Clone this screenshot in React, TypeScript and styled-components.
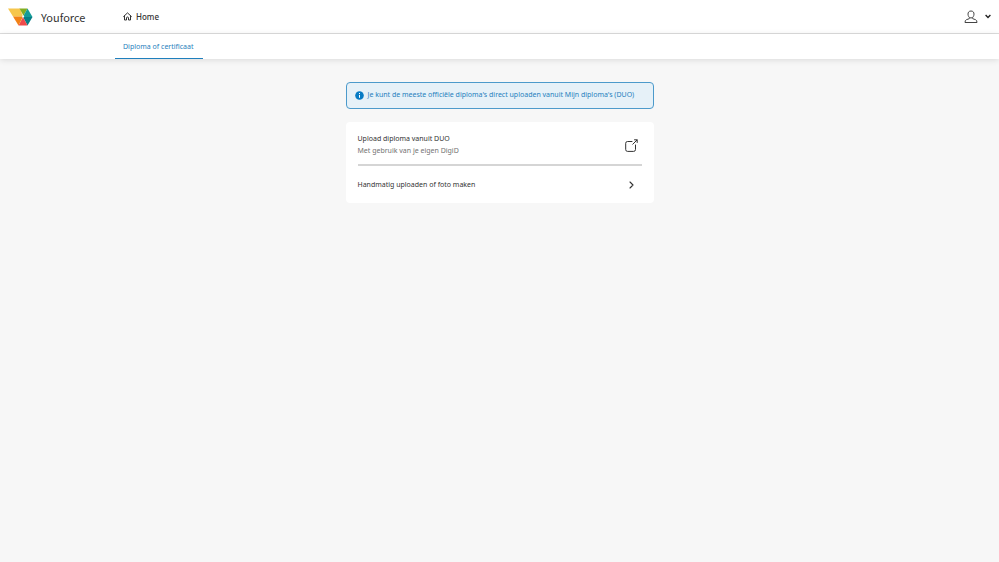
import React from "react";
import styled, { createGlobalStyle } from "styled-components";

const GlobalStyle = createGlobalStyle`
  *, *::before, *::after { box-sizing: border-box; }
  body {
    margin: 0;
    background: #f7f7f7;
    color: #333333;
    font: 7px/12px "Noto Sans", "Open Sans", sans-serif;
  }
  a { color: inherit; text-decoration: none; }
  button { font: inherit; color: inherit; background: none; border: 0; padding: 0; cursor: pointer; }
  svg { display: block; flex: none; }
`;

const TopBar = styled.header`
  display: flex;
  align-items: center;
  height: 34px;
  padding: 0 8px;
  background: #ffffff;
  border-bottom: 1px solid #dedede;
`;

const Brand = styled.a`
  display: flex;
  align-items: center;
  gap: 8px;
  width: 115px;
  font: 11px/16px "Noto Sans CJK JP", sans-serif;
`;

const HomeLink = styled.a`
  display: flex;
  align-items: center;
  gap: 4px;
  font: 500 8px/12px "Noto Sans", sans-serif;
`;

const AccountButton = styled.button`
  display: flex;
  align-items: center;
  gap: 7px;
  margin-left: auto;
`;

const TabBar = styled.nav`
  display: flex;
  height: 25px;
  padding-left: 115px;
  background: #ffffff;
  box-shadow: 0 1px 6px rgba(0, 0, 0, 0.12);
`;

const Tab = styled.a`
  padding: 7px 9px 5px 8px;
  color: #1f7fbd;
  border-bottom: 1px solid #1f7fbd;
`;

const Content = styled.main`
  display: flex;
  flex-direction: column;
  gap: 13px;
  width: 100%;
  max-width: 308px;
  margin: 23px auto 0;
`;

const Notice = styled.p`
  display: flex;
  align-items: center;
  gap: 4px;
  margin: 0;
  padding: 6px 8px 7px;
  color: #1f7fbd;
  background: #e6f1f8;
  border: 1px solid #4c9acb;
  border-radius: 4px;
  line-height: 12px;
`;

const Card = styled.section`
  padding: 0 12px;
  background: #ffffff;
  border-radius: 4px;
`;

const Option = styled.button<{ $divided?: boolean }>`
  display: flex;
  align-items: center;
  justify-content: space-between;
  width: 100%;
  height: ${(p) => (p.$divided ? 44 : 37)}px;
  padding: ${(p) => (p.$divided ? 4 : 0)}px 4px 0 0;
  text-align: left;
  border-bottom: ${(p) => (p.$divided ? "2px solid #d5d5d5" : "0")};
`;

const OptionText = styled.span`
  display: flex;
  flex-direction: column;
`;

const Hint = styled.span`
  color: #737373;
`;

const IconSlot = styled.span`
  display: flex;
  justify-content: center;
  width: 13px;
`;

const Logo = () => (
  <svg width="25" height="18" viewBox="0 0 25 18" aria-hidden="true">
    <path d="M0 .5H12L15 8.5H5Z" fill="#f6c64c" />
    <path d="M11.5 .5H19.5L15.5 7.8Z" fill="#83ad21" />
    <path d="M19.5 .5 24.5 9H15.5V7.8Z" fill="#159c98" />
    <path d="M24.5 9 19.5 17.5 15 9Z" fill="#087f86" />
    <path d="M15 9 19.5 17.5H10.5Z" fill="#ef4b4b" />
    <path d="M5 8.5H15L10.5 17.5Z" fill="#f28116" />
    <circle cx="15.2" cy="8.6" r="1" fill="#fff" />
  </svg>
);

const HomeIcon = () => (
  <svg width="9" height="9" viewBox="0 0 9 9" fill="none" stroke="#333" strokeWidth="1" strokeLinecap="round" strokeLinejoin="round" aria-hidden="true">
    <path d="M.6 4.5 4.5 .9 8.4 4.5M1.5 4V8H3.5V5.9Q3.5 5 4.5 5T5.5 5.9V8H7.5V4" />
  </svg>
);

const PersonIcon = () => (
  <svg width="14" height="14" viewBox="0 0 14 14" fill="none" stroke="#444" strokeWidth="1" strokeLinejoin="round" aria-hidden="true">
    <path d="M7 1C4.9 1 4 2.4 4 4.1S5.1 8 7 8 10 5.8 10 4.1 9.1 1 7 1ZM5.3 7.5V8.7L2.4 9.7Q1 10.2 1 12.5H13Q13 10.2 11.6 9.7L8.7 8.7V7.5" />
  </svg>
);

const CaretIcon = () => (
  <svg width="6" height="5" viewBox="0 0 6 5" fill="none" stroke="#222" strokeWidth="1.4" aria-hidden="true">
    <path d="M.6 1 3 3.4 5.4 1" />
  </svg>
);

const InfoIcon = () => (
  <svg width="9" height="9" viewBox="0 0 9 9" aria-hidden="true">
    <circle cx="4.5" cy="4.5" r="4.3" fill="#087bc4" />
    <path d="M4.5 2V3M4.5 3.9V6.8" stroke="#fff" strokeWidth="1" />
  </svg>
);

const ExternalIcon = () => (
  <svg width="13" height="13" viewBox="0 0 13 13" fill="none" stroke="#333" strokeWidth="1" strokeLinecap="round" strokeLinejoin="round" aria-hidden="true">
    <path d="M7 2.5H2.5Q.7 2.5 .7 4.3V10.5Q.7 12.4 2.5 12.4H8.6Q10.5 12.4 10.5 10.5V6M7.8 5.2 12 1M9.5 .8H12.2V3.5" />
  </svg>
);

const ChevronIcon = () => (
  <svg width="5" height="8" viewBox="0 0 5 8" fill="none" stroke="#333" strokeWidth="1.1" strokeLinecap="round" strokeLinejoin="round" aria-hidden="true">
    <path d="M1 1 4 4 1 7" />
  </svg>
);

export default function App() {
  return (
    <>
      <GlobalStyle />
      <TopBar>
        <Brand href="#"><Logo />Youforce</Brand>
        <HomeLink href="#"><HomeIcon />Home</HomeLink>
        <AccountButton aria-label="Account"><PersonIcon /><CaretIcon /></AccountButton>
      </TopBar>
      <TabBar>
        <Tab href="#" aria-current="page">Diploma of certificaat</Tab>
      </TabBar>
      <Content>
        <Notice><InfoIcon />Je kunt de meeste officiële diploma's direct uploaden vanuit Mijn diploma's (DUO)</Notice>
        <Card>
          <Option $divided>
            <OptionText>
              <span>Upload diploma vanuit DUO</span>
              <Hint>Met gebruik van je eigen DigiD</Hint>
            </OptionText>
            <IconSlot><ExternalIcon /></IconSlot>
          </Option>
          <Option>
            <span>Handmatig uploaden of foto maken</span>
            <IconSlot><ChevronIcon /></IconSlot>
          </Option>
        </Card>
      </Content>
    </>
  );
}
